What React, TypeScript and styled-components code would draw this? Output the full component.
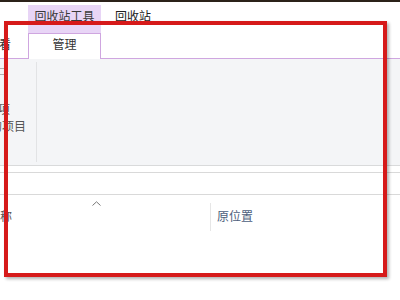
import { FunctionComponent } from "react";
import styled, { createGlobalStyle } from "styled-components";

const GlobalStyle = createGlobalStyle`
  html, body {
    margin: 0;
    padding: 0;
    background: #ffffff;
  }
  body {
    width: 400px;
    height: 300px;
    overflow: hidden;
    font-family: "Noto Sans CJK SC", "Noto Sans", sans-serif;
    font-size: 12px;
    color: #333333;
  }
`;

const App: FunctionComponent = () => {
  return (
    <>
      <GlobalStyle />
      <Window>
        <TopEdge />
        <TitleTabs>
          <ContextTab>回收站工具</ContextTab>
          <TitleText>回收站</TitleText>
        </TitleTabs>
        <RibbonTabs>
          <RibbonTab>查看</RibbonTab>
          <ActiveTab>管理</ActiveTab>
        </RibbonTabs>
        <RibbonBody>
          <RibbonGroup>
            <SmallIcon />
            <LabelStack>
              <RibbonLabel $shift={-50}>还原所有项</RibbonLabel>
              <RibbonLabel $shift={-58}>还原选定的项目</RibbonLabel>
            </LabelStack>
          </RibbonGroup>
          <GroupDivider />
        </RibbonBody>
        <Gap />
        <AddressBar />
        <ColumnHeader>
          <NameColumn>
            <SortCaret>
              <svg width="9" height="5" viewBox="0 0 9 5">
                <path d="M0.5 4.5 L4.5 0.8 L8.5 4.5" fill="none" stroke="#777" strokeWidth="1" />
              </svg>
            </SortCaret>
            <HeaderText $shift={-12}>名称</HeaderText>
          </NameColumn>
          <ColumnDivider />
          <HeaderText $shift={0} $accent>原位置</HeaderText>
        </ColumnHeader>
        <Annotation />
      </Window>
    </>
  );
};

const Window = styled.div`
  position: relative;
  width: 400px;
  height: 300px;
  overflow: hidden;
  display: flex;
  flex-direction: column;
`;

const TopEdge = styled.div`
  height: 2px;
  background: #2b2219;
`;

const TitleTabs = styled.div`
  height: 31px;
  display: flex;
  align-items: flex-end;
  padding-left: 28px;
`;

const ContextTab = styled.div`
  width: 73px;
  height: 28px;
  box-sizing: border-box;
  padding-top: 2px;
  background: #e8d5f6;
  text-align: center;
  line-height: 18px;
  color: #3a3a3a;
`;

const TitleText = styled.div`
  height: 28px;
  box-sizing: border-box;
  padding-top: 2px;
  margin-left: 14px;
  line-height: 18px;
  color: #222222;
`;

const RibbonTabs = styled.div`
  height: 26px;
  box-sizing: border-box;
  display: flex;
  border-bottom: 1px solid #cfa6e0;
`;

const RibbonTab = styled.div`
  width: 41px;
  margin-left: -13px;
  line-height: 22px;
  padding-top: 0;
  color: #333333;
`;

const ActiveTab = styled.div`
  width: 73px;
  height: 26px;
  box-sizing: border-box;
  background: #ffffff;
  border: 1px solid #cfa6e0;
  border-bottom: none;
  text-align: center;
  line-height: 20px;
  color: #333333;
`;

const RibbonBody = styled.div`
  height: 107px;
  box-sizing: border-box;
  background: #f4f5f7;
  border-bottom: 1px solid #d9dadb;
  display: flex;
  padding: 3px 0;
`;

const RibbonGroup = styled.div`
  width: 36px;
  overflow: hidden;
  display: flex;
  flex-direction: column;
`;

const SmallIcon = styled.div`
  width: 10px;
  height: 5px;
  margin-top: 6px;
  margin-left: -5px;
  border: 1px solid #b0b0b0;
  border-right: none;
`;

const LabelStack = styled.div`
  margin-top: 25px;
  display: flex;
  flex-direction: column;
`;

const RibbonLabel = styled.div<{ $shift: number }>`
  margin-left: ${({ $shift }) => $shift}px;
  white-space: nowrap;
  line-height: 17px;
  color: #555555;
`;

const GroupDivider = styled.div`
  width: 1px;
  background: #e2e3e5;
`;

const Gap = styled.div`
  height: 6px;
`;

const AddressBar = styled.div`
  height: 23px;
  box-sizing: border-box;
  border-top: 1px solid #d9d9d9;
  border-bottom: 1px solid #d9d9d9;
`;

const ColumnHeader = styled.div`
  height: 38px;
  display: flex;
  align-items: stretch;
`;

const NameColumn = styled.div`
  width: 210px;
  position: relative;
  display: flex;
  align-items: center;
`;

const SortCaret = styled.div`
  position: absolute;
  left: 92px;
  top: 6px;
  line-height: 0;
`;

const HeaderText = styled.div<{ $shift: number; $accent?: boolean }>`
  margin-left: ${({ $shift }) => $shift}px;
  padding-top: 2px;
  align-self: center;
  white-space: nowrap;
  color: ${({ $accent }) => ($accent ? "#4c5e7c" : "#555555")};
`;

const ColumnDivider = styled.div`
  width: 1px;
  margin: 8px 6px 2px 0;
  background: #e6e6e6;
`;

const Annotation = styled.div`
  position: absolute;
  left: 4px;
  top: 21px;
  width: 383px;
  height: 256px;
  box-sizing: border-box;
  border: 4px solid #d61a1a;
  box-shadow: 2px 2px 3px rgba(0, 0, 0, 0.3);
  pointer-events: none;
`;

export default App;
